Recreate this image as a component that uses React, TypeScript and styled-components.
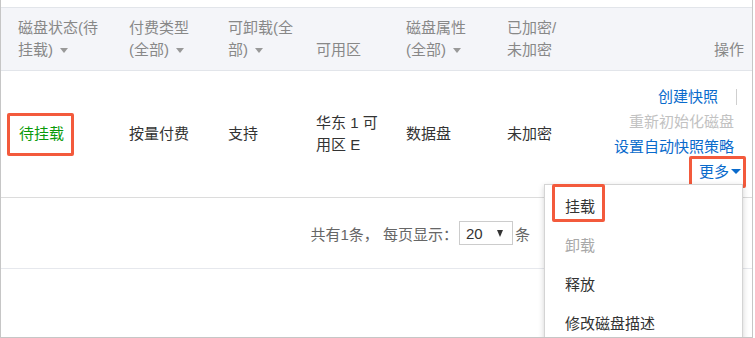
import React from "react";
import styled, { createGlobalStyle } from "styled-components";

const GlobalStyle = createGlobalStyle`
  html, body { margin: 0; padding: 0; background: #fff; }
  body {
    font-family: "Liberation Sans", "Noto Sans CJK SC", sans-serif;
    font-size: 15px;
    color: #333;
  }
`;

const cols = "111px 99px 88px 90px 101px 100px 1fr";

const Frame = styled.div`
  position: relative;
  width: 753px;
  height: 338px;
  box-sizing: border-box;
  border-left: 1px solid #c6c6c6;
  border-right: 1px solid #c6c6c6;
  border-bottom: 1px solid #c6c6c6;
  padding-top: 7px;
  overflow: hidden;
`;

const HeaderRow = styled.div`
  display: grid;
  grid-template-columns: ${cols};
  align-items: end;
  background: #f4f5f9;
  border-top: 1px solid #e2e5ea;
  border-bottom: 1px solid #e2e5ea;
  padding: 9px 0;
`;

const HeadCell = styled.div<{ $right?: boolean }>`
  padding-left: ${(p) => (p.$right ? 0 : 17)}px;
  padding-right: ${(p) => (p.$right ? 8 : 0)}px;
  text-align: ${(p) => (p.$right ? "right" : "left")};
  color: #888;
  line-height: 22px;
  white-space: nowrap;
`;

const Line = styled.span`
  display: block;
`;

const Caret = styled.span<{ $color?: string }>`
  display: inline-block;
  width: 0;
  height: 0;
  border-left: 4px solid transparent;
  border-right: 4px solid transparent;
  border-top: 5px solid ${(p) => p.$color || "#999"};
  margin-left: 7px;
  vertical-align: middle;
  position: relative;
  top: -1px;
`;

const BodyRow = styled.div`
  display: grid;
  grid-template-columns: ${cols};
  align-items: center;
  height: 126px;
  border-bottom: 1px solid #dcdcdc;
`;

const Cell = styled.div<{ $right?: boolean }>`
  padding-left: ${(p) => (p.$right ? 0 : 17)}px;
  padding-right: ${(p) => (p.$right ? 18 : 0)}px;
  line-height: 22px;
  color: #333;
  white-space: nowrap;
`;

const Status = styled.span`
  position: relative;
  display: inline-block;
  color: #0a9a0a;
  padding-left: 1px;
  &::after {
    content: "";
    position: absolute;
    left: -11px;
    right: -10px;
    top: -10px;
    bottom: -11px;
    border: 3px solid #f35a3c;
    border-radius: 2px;
  }
`;

const OpList = styled.div`
  display: flex;
  flex-direction: column;
  align-items: flex-end;
  line-height: 25px;
`;

const OpLine = styled.div`
  display: flex;
  align-items: center;
`;

const Link = styled.span<{ $disabled?: boolean }>`
  color: ${(p) => (p.$disabled ? "#c2c2c2" : "#0a6bcc")};
`;

const Sep = styled.span`
  display: inline-block;
  width: 1px;
  height: 16px;
  background: #cfcfcf;
  margin-left: 18px;
  margin-right: -3px;
`;

const More = styled.span`
  position: relative;
  display: inline-flex;
  align-items: center;
  color: #0a6bcc;
  margin-right: -7px;
  &::after {
    content: "";
    position: absolute;
    left: -10px;
    right: -5px;
    top: -3px;
    bottom: -4px;
    border: 3px solid #f35a3c;
    border-radius: 2px;
  }
`;

const MoreCaret = styled.span`
  display: inline-block;
  width: 0;
  height: 0;
  border-left: 5px solid transparent;
  border-right: 5px solid transparent;
  border-top: 5px solid #0a6bcc;
  margin-left: 2px;
`;

const Menu = styled.div`
  position: absolute;
  top: 100%;
  right: -2px;
  width: 199px;
  box-sizing: border-box;
  background: #fff;
  border: 1px solid #d4d4d4;
  box-shadow: 0 2px 6px rgba(0, 0, 0, 0.18);
  padding-top: 2px;
  z-index: 5;
  line-height: 39px;
  text-align: left;
`;

const MenuItem = styled.div<{ $disabled?: boolean; $marked?: boolean }>`
  position: relative;
  height: 39px;
  padding-left: 20px;
  color: ${(p) => (p.$disabled ? "#a8a8a8" : "#333")};
  &::after {
    content: "";
    display: ${(p) => (p.$marked ? "block" : "none")};
    position: absolute;
    left: 7px;
    top: -3px;
    width: 53px;
    height: 38px;
    box-sizing: border-box;
    border: 3px solid #f35a3c;
    border-radius: 2px;
  }
`;

const Pager = styled.div`
  display: flex;
  align-items: center;
  justify-content: flex-end;
  height: 70px;
  padding-right: 222px;
  border-bottom: 1px solid #e6e8ed;
  color: #666;
  white-space: nowrap;
`;

const Select = styled.div`
  display: flex;
  align-items: center;
  justify-content: space-between;
  width: 54px;
  height: 24px;
  box-sizing: border-box;
  border: 1px solid #cccccc;
  padding: 0 9px 0 6px;
  margin-left: 1px;
  color: #333;
`;

const SelectCaret = styled.span`
  display: inline-block;
  width: 0;
  height: 0;
  border-left: 3.5px solid transparent;
  border-right: 3.5px solid transparent;
  border-top: 7px solid #333;
`;

const Unit = styled.span`
  margin-left: 2px;
`;

export default function App() {
  return (
    <>
      <GlobalStyle />
      <Frame>
        <HeaderRow>
          <HeadCell>
            <Line>磁盘状态(待</Line>
            <Line>
              挂载)<Caret />
            </Line>
          </HeadCell>
          <HeadCell>
            <Line>付费类型</Line>
            <Line>
              (全部)<Caret />
            </Line>
          </HeadCell>
          <HeadCell>
            <Line>可卸载(全</Line>
            <Line>
              部)<Caret />
            </Line>
          </HeadCell>
          <HeadCell>
            <Line>可用区</Line>
          </HeadCell>
          <HeadCell>
            <Line>磁盘属性</Line>
            <Line>
              (全部)<Caret />
            </Line>
          </HeadCell>
          <HeadCell>
            <Line>已加密/</Line>
            <Line>未加密</Line>
          </HeadCell>
          <HeadCell $right>
            <Line>操作</Line>
          </HeadCell>
        </HeaderRow>

        <BodyRow>
          <Cell>
            <Status>待挂载</Status>
          </Cell>
          <Cell>按量付费</Cell>
          <Cell>支持</Cell>
          <Cell>
            <Line>华东 1 可</Line>
            <Line>用区 E</Line>
          </Cell>
          <Cell>数据盘</Cell>
          <Cell>未加密</Cell>
          <Cell $right>
            <OpList>
              <OpLine>
                <Link>创建快照</Link>
                <Sep />
              </OpLine>
              <OpLine>
                <Link $disabled>重新初始化磁盘</Link>
              </OpLine>
              <OpLine>
                <Link>设置自动快照策略</Link>
              </OpLine>
              <OpLine>
                <More>
                  更多
                  <MoreCaret />
                  <Menu>
                    <MenuItem $marked>挂载</MenuItem>
                    <MenuItem $disabled>卸载</MenuItem>
                    <MenuItem>释放</MenuItem>
                    <MenuItem>修改磁盘描述</MenuItem>
                  </Menu>
                </More>
              </OpLine>
            </OpList>
          </Cell>
        </BodyRow>

        <Pager>
          共有1条， 每页显示：
          <Select>
            <span>20</span>
            <SelectCaret />
          </Select>
          <Unit>条</Unit>
        </Pager>
      </Frame>
    </>
  );
}
